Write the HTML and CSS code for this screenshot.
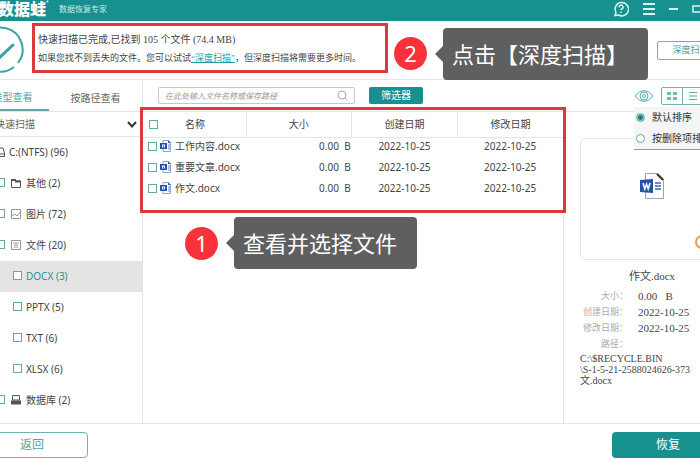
FILE: index.html
```html
<!DOCTYPE html>
<html lang="zh-CN">
<head>
<meta charset="utf-8">
<title>数据蛙数据恢复专家</title>
<link rel="stylesheet" href="styles.css">
</head>
<body>
<svg class="defs" aria-hidden="true">
  <symbol id="doc" viewBox="0 0 24 26">
    <path d="M5.500.500H18L23.500 6V25.500H5.500Z" fill="#fff" stroke="#9aa3b5"/>
    <path d="M17 1L23 7" stroke="#333" stroke-width="2"/>
    <path d="M15 10H21M15 13H21M15 16H21" stroke="#3f66b0" stroke-width="1.500"/>
    <path d="M0 7L13 6V20L0 19Z" fill="#2254a5"/>
    <path d="M3 10L4.800 16L6.500 11L8.200 16L10 10" fill="none" stroke="#fff" stroke-width="1.500"/>
  </symbol>
  <symbol id="doc-small" viewBox="0 0 11 12">
    <path d="M3 .5H8L10.500 3V11.500H3Z" fill="#fff" stroke="#8fa5cf"/>
    <path d="M8 0L11 3H8Z" fill="#2d5eac"/>
    <path d="M8 5H10M8 7H10M8 9H10" stroke="#6787bd"/>
    <path d="M0 3H7V9H0Z" fill="#2254a5"/>
    <path d="M2 4.500H5V7.500H2Z" fill="#fff"/>
    <path d="M3 5.500H4V7.500H3Z" fill="#2254a5"/>
  </symbol>
</svg>
<div class="app">
  <header class="titlebar">
    <strong class="logo">数据蛙<svg class="dots" viewBox="0 0 6 6"><circle cx="1.500" cy="3" r="1"/><circle cx="4.500" cy="1.500" r="1"/></svg></strong>
    <span class="product">数据恢复专家</span>
    <div class="window-tools">
      <button aria-label="帮助"><svg width="16" height="16" viewBox="0 0 16 16"><path d="M2 14.500L3 11.500A6.700 6.700 0 1 1 5.500 14L2 14.500Z"/><path d="M6 6.300A2 2 0 1 1 8.700 8Q8 8.400 8 9.300M8 10.800V12"/></svg></button>
      <button aria-label="菜单"><svg width="12" height="12" viewBox="0 0 12 12"><path d="M0 1H12M0 6H12M0 11H12" stroke-width="2"/></svg></button>
      <button aria-label="最小化"><svg width="9" height="12" viewBox="0 0 9 12"><path d="M0 6H9" stroke-width="2"/></svg></button>
      <button aria-label="最大化"><svg width="12" height="12" viewBox="0 0 12 12"><path d="M1 3H11V9H1Z"/></svg></button>
    </div>
  </header>

  <section class="banner">
    <svg class="status" width="48" height="48" viewBox="0 0 48 48"><path d="M42 37A22 22 0 1 0 38 41"/><path class="tick" d="M14 25L22 33L37 19"/></svg>
    <div class="message">
      <p class="summary">快速扫描已完成,已找到 105 个文件 (74.4 MB)</p>
      <p class="hint">如果您找不到丢失的文件。您可以试试<a href="#deep">“深度扫描”</a>，但深度扫描将需要更多时间。</p>
    </div>
    <div class="note note-top"><span class="step">2</span><span class="bubble">点击【深度扫描】</span></div>
    <button class="deep" id="deep">深度扫描</button>
  </section>

  <div class="body">
    <aside class="sidebar">
      <nav class="tabs"><button class="tab active">类型查看</button><button class="tab">按路径查看</button></nav>
      <button class="scan">快速扫描<svg width="10" height="7" viewBox="0 0 10 7"><path d="M1 1L5 5.500L9 1"/></svg></button>
      <ul class="tree">
        <li class="drive"><svg width="10" height="10" viewBox="0 0 10 10"><path d="M2 1H8L9.500 6V9.500H.5V6ZM.5 7H9.500"/></svg><span>C:(NTFS) (96)</span></li>
        <li><label><input type="checkbox"><svg width="10" height="10" viewBox="0 0 10 10"><path d="M.5 9.500V1.500H4L5 3H9.500V9.500Z"/><path d="M0 2H5M4 3.500H10" stroke-width="2"/></svg>其他 (2)</label></li>
        <li><label><input type="checkbox"><svg class="pale" width="10" height="10" viewBox="0 0 10 10"><path d="M.5.500H9.500V9.500H.5ZM1 7L4 5L6 7L9 3"/></svg>图片 (72)</label></li>
        <li><label><input type="checkbox"><svg class="pale" width="10" height="10" viewBox="0 0 10 10"><path d="M.5.500H9.500V9.500H.5ZM2 3H8M3 5H7M3 7H7"/></svg>文件 (20)</label></li>
        <li class="child selected"><label><input type="checkbox">DOCX (3)</label></li>
        <li class="child"><label><input type="checkbox">PPTX (5)</label></li>
        <li class="child"><label><input type="checkbox">TXT (6)</label></li>
        <li class="child"><label><input type="checkbox">XLSX (6)</label></li>
        <li><label><input type="checkbox"><svg width="10" height="10" viewBox="0 0 10 10"><path d="M1.500.500H8.500V5H1.500Z"/><path d="M0 7.500H10" stroke-width="4"/></svg>数据库 (2)</label></li>
      </ul>
    </aside>

    <div class="content">
      <div class="toolbar">
        <div class="search"><input type="text" aria-label="搜索" placeholder="在此处输入文件名称或保存路径"><svg width="11" height="11" viewBox="0 0 11 11"><circle cx="5" cy="5" r="4"/><path d="M8 8L10.500 10.500"/></svg></div>
        <button class="filter">筛选器</button>
        <div class="view-tools">
          <button aria-label="预览"><svg width="20" height="14" viewBox="0 0 20 14"><path d="M1 7Q10-4 19 7Q10 18 1 7Z"/><circle cx="10" cy="7" r="4"/><circle cx="10" cy="7" r="1.500"/></svg></button>
          <div class="switch">
            <button aria-label="网格"><svg width="10" height="10" viewBox="0 0 10 10"><path class="solid" d="M0 1H4V4H0ZM6 1H10V4H6ZM0 6H4V9H0ZM6 6H10V9H6Z"/></svg></button>
            <button aria-label="列表"><svg width="8" height="10" viewBox="0 0 8 10"><path d="M0 1.500H8M0 5H8M0 8.500H8"/></svg></button>
          </div>
          <div class="sort-menu">
            <label><input type="radio" name="sort" checked>默认排序</label>
            <label><input type="radio" name="sort">按删除项排序</label>
          </div>
        </div>
      </div>

      <div class="panes">
        <main class="files">
          <table>
            <colgroup><col class="c-name"><col><col><col></colgroup>
            <thead><tr><th><div class="name-head"><input type="checkbox" aria-label="全选"><span>名称</span></div></th><th>大小</th><th>创建日期</th><th>修改日期</th></tr></thead>
            <tbody>
              <tr><td><label><input type="checkbox"><svg width="11" height="12"><use href="#doc-small"/></svg>工作内容.docx</label></td><td class="size">0.00&nbsp; B</td><td>2022-10-25</td><td>2022-10-25</td></tr>
              <tr><td><label><input type="checkbox"><svg width="11" height="12"><use href="#doc-small"/></svg>重要文章.docx</label></td><td class="size">0.00&nbsp; B</td><td>2022-10-25</td><td>2022-10-25</td></tr>
              <tr><td><label><input type="checkbox"><svg width="11" height="12"><use href="#doc-small"/></svg>作文.docx</label></td><td class="size">0.00&nbsp; B</td><td>2022-10-25</td><td>2022-10-25</td></tr>
            </tbody>
          </table>
          <div class="frame"></div>
          <div class="note note-list"><span class="step">1</span><span class="bubble">查看并选择文件</span></div>
        </main>

        <aside class="detail">
          <div class="preview"><svg width="24" height="26"><use href="#doc"/></svg><svg class="magnify" width="16" height="16" viewBox="0 0 16 16"><circle cx="7" cy="7" r="6"/><path d="M11 11L15 15"/></svg></div>
          <h2>作文.docx</h2>
          <dl>
            <dt>大小：</dt><dd>0.00&nbsp;&nbsp; B</dd>
            <dt>创建日期：</dt><dd>2022-10-25</dd>
            <dt>修改日期：</dt><dd>2022-10-25</dd>
            <dt>路径：</dt><dd></dd>
          </dl>
          <p class="path">C:\$RECYCLE.BIN<br>\S-1-5-21-2588024626-373<br>文.docx</p>
        </aside>
      </div>
    </div>
  </div>

  <footer class="actions"><button class="back">返回</button><button class="restore">恢复</button></footer>
</div>
</body>
</html>
```

FILE: styles.css
```css
:root {
  --teal: #17918f;
  --line: #e4e6e6;
  --red: #dc383d;
  --edge: #6db3b1;
}

* { box-sizing: border-box; }

body {
  margin: 0;
  overflow: hidden;
  background: #fff;
  color: #444;
  font: 10px/16px "Noto Sans", "Noto Sans CJK SC", sans-serif;
}

.defs { position: absolute; width: 0; height: 0; }

button {
  padding: 0;
  border: 0;
  background: none;
  color: inherit;
  font: inherit;
}

p, h2, dl, dd, ul { margin: 0; padding: 0; }
svg { flex: none; fill: none; }

input[type="checkbox"] {
  appearance: none;
  flex: none;
  width: 9px;
  height: 9px;
  margin: 0;
  border: 1px solid #63aaa5;
  background: #fff;
}

/* The window is wider than the viewport and runs past both sides. */
.app {
  display: flex;
  flex-direction: column;
  min-height: 100vh;
  margin: 0 -40px 0 -24px;
}

.titlebar {
  display: flex;
  align-items: center;
  height: 21px;
  padding: 0 36px 3px 22px;
  background: var(--teal);
  color: #fff;
}

.logo {
  position: relative;
  margin-right: 13px;
  font-size: 16px;
  line-height: 18px;
  font-weight: 900;
}
.dots { position: absolute; top: 0; right: -3px; width: 6px; height: 6px; fill: #fff; }
.product { font-size: 8px; color: #c7e8e6; }

.window-tools {
  display: flex;
  align-items: center;
  gap: 14px;
  margin-left: auto;
}
.window-tools button { display: flex; }
.window-tools svg { stroke: #d9f3f2; stroke-width: 1.500; }

.banner {
  display: flex;
  align-items: center;
  height: 59px;
  padding: 0 16px 0 0;
  border-bottom: 1px solid var(--line);
}
.status { stroke: #3aa5a1; stroke-width: 2; }
.status .tick { stroke-width: 3; stroke-linecap: round; }

.message {
  display: flex;
  flex-direction: column;
  justify-content: center;
  width: 356px;
  height: 50px;
  margin: 0 6px 4px 8px;
  padding: 2px 0 0 3px;
  border: 3px solid var(--red);
  font-family: "Liberation Serif", "Noto Sans CJK SC", serif;
  line-height: 18px;
  white-space: nowrap;
}
.hint { font-size: 9px; }
.hint a { color: #239b98; }

.deep {
  width: 67px;
  height: 19px;
  margin-left: auto;
  border: 1px solid var(--edge);
  border-radius: 2px;
  color: #3b9d9a;
  font-size: 9px;
}

.note {
  display: flex;
  align-items: center;
  gap: 16px;
  color: #fff;
  font-size: 22px;
  line-height: 52px;
  white-space: nowrap;
}
.note-top { z-index: 1; margin-bottom: -7px; }
.step {
  width: 33px;
  border-radius: 50%;
  background: #f8323b;
  line-height: 33px;
  text-align: center;
}
.bubble {
  position: relative;
  padding: 0 20px 0 9px;
  border-radius: 4px;
  background: #5f5f5f;
}
.bubble::before {
  content: "";
  position: absolute;
  top: 18px;
  left: -8px;
  border: 8px solid transparent;
  border-right-color: #5f5f5f;
  border-left: 0;
}

.body { display: flex; flex: 1; }

.sidebar {
  width: 167px;
  border-right: 1px solid var(--line);
}
.tabs {
  display: flex;
  height: 32px;
  border-bottom: 1px solid var(--line);
  color: #666;
}
.tab { flex: 1; padding-top: 4px; }
.tab.active {
  flex: 0 0 73px;
  border-bottom: 2px solid #58a9a6;
  color: #4ba5a2;
}
.scan {
  display: flex;
  align-items: center;
  justify-content: space-between;
  width: 100%;
  height: 25px;
  padding: 0 5px 0 19px;
  border-bottom: 1px solid var(--line);
  color: #666;
}
.scan svg { stroke: #333; stroke-width: 2; }

.tree { list-style: none; }
.tree li {
  display: flex;
  align-items: center;
  height: 31px;
  padding: 0 0 2px 20px;
}
.tree label { display: flex; align-items: center; }
.tree svg { margin: 0 5px 0 6px; stroke: #555; }
.tree svg.pale { stroke: #999; }
.tree .drive svg { margin: 0 4px 0 -1px; }
.tree .child { padding-left: 37px; }
.tree .child input { margin-right: 4px; }
.tree .selected { background: #e4e4e4; color: #318e8b; }

.content {
  display: flex;
  flex: 1;
  flex-direction: column;
  min-width: 0;
}
.toolbar {
  display: flex;
  align-items: center;
  height: 32px;
  padding: 0 16px 0 15px;
  border-bottom: 1px solid var(--line);
}
.search {
  display: flex;
  align-items: center;
  width: 197px;
  height: 17px;
  padding: 0 6px;
  border: 1px solid #c8c8c8;
  border-radius: 2px;
}
.search input {
  flex: 1;
  min-width: 0;
  padding: 0;
  border: 0;
  outline: 0;
  background: none;
  font: italic 8px/14px "Noto Sans CJK SC", sans-serif;
}
.search input::placeholder { color: #999; }
.search svg { stroke: #aaa; }
.filter {
  width: 54px;
  height: 17px;
  margin-left: 14px;
  border-radius: 2px;
  background: var(--teal);
  color: #fff;
  line-height: 17px;
}

.view-tools {
  position: relative;
  display: flex;
  align-items: center;
  gap: 7px;
  width: 90px;
  margin-left: auto;
}
.view-tools button { display: flex; align-items: center; justify-content: center; }
.view-tools svg { stroke: #55a9a6; }
.view-tools .solid { fill: #72b9b6; stroke: none; }
.switch {
  display: flex;
  height: 18px;
  border: 1px solid var(--edge);
  border-radius: 2px;
}
.switch button { width: 20px; }
.switch button + button { border-left: 1px solid var(--edge); }

.sort-menu {
  position: absolute;
  top: 20px;
  left: 0;
  z-index: 2;
  width: 100%;
  border-bottom: 1px solid #999;
  background: #f5f5f5;
  color: #333;
  white-space: nowrap;
}
.sort-menu label { display: flex; align-items: center; gap: 7px; height: 21px; padding-left: 2px; }
.sort-menu input {
  appearance: none;
  flex: none;
  width: 9px;
  height: 9px;
  margin: 0;
  border: 1px solid #63aaa5;
  border-radius: 50%;
  background: #fff;
}
.sort-menu input:checked { background: radial-gradient(#17827e 0 2px, #9fd0cd 3px); }

.panes { display: flex; flex: 1; }
.files { position: relative; flex: 1; }

table { width: 100%; border-collapse: collapse; table-layout: fixed; }
.c-name { width: 103px; }
th, td { padding: 0; text-align: center; font-weight: 400; white-space: nowrap; }
th {
  height: 25px;
  border-bottom: 1px solid var(--line);
  border-right: 1px solid var(--line);
}
th:last-child { border-right: 0; }
td { height: 21px; padding-bottom: 3px; }
.name-head { display: flex; align-items: center; gap: 27px; padding-left: 6px; }
td label { display: flex; align-items: center; padding-left: 5px; }
td svg { margin: 0 4px 0 3px; }
td.size { padding-right: 1px; text-align: right; }

.frame {
  position: absolute;
  top: -5px;
  right: -3px;
  left: -3px;
  height: 106px;
  border: 3px solid var(--red);
}
.note-list { margin: 17px 0 0 42px; }

.detail {
  width: 177px;
  padding: 26px 16px 0;
  border-left: 1px solid var(--line);
  font-family: "Liberation Serif", "Noto Sans CJK SC", serif;
}
.preview {
  position: relative;
  display: flex;
  justify-content: center;
  height: 122px;
  padding-top: 34px;
  border: 1px solid var(--line);
  border-radius: 5px;
}
.magnify { position: absolute; right: 12px; bottom: 8px; stroke: #dfa34b; stroke-width: 2; }
h2 { margin: 8px 0 4px; text-align: center; font-size: 11px; font-weight: 400; }
dl {
  display: grid;
  grid-template-columns: 48px 1fr;
  grid-auto-rows: 16px;
  column-gap: 10px;
  font-size: 11px;
}
dt { color: #aaa; font-size: 9px; text-align: right; }
.path { margin-top: 1px; line-height: 11px; }

.actions {
  display: flex;
  align-items: center;
  justify-content: space-between;
  height: 47px;
  padding: 0 16px 4px 0;
  border-top: 1px solid var(--line);
}
.actions button { width: 112px; height: 26px; border-radius: 4px; font-size: 12px; }
.back { border: 1px solid var(--edge); color: #4ba5a2; }
.restore { background: var(--teal); color: #fff; }
```
